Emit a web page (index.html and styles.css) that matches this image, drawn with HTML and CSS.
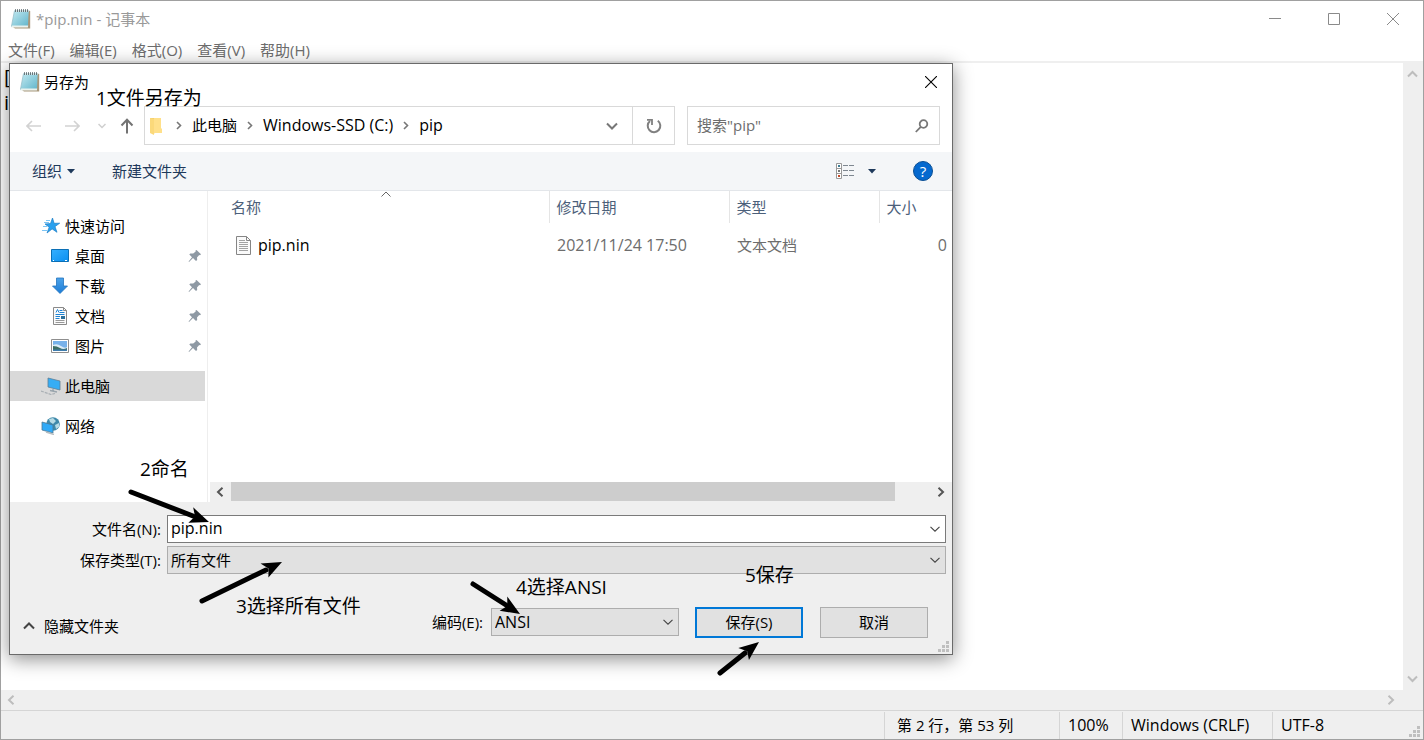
FILE: index.html
```html
<!DOCTYPE html>
<html lang="zh-CN">
<head>
<meta charset="utf-8">
<title>*pip.nin - 记事本</title>
<link rel="stylesheet" href="styles.css">
</head>
<body>
<svg class="defs" width="0" height="0" aria-hidden="true">
  <defs>
    <linearGradient id="pad" x1="0" y1="0" x2="1" y2="1"><stop offset="0" stop-color="#c4eaf1"/><stop offset="1" stop-color="#5fb4ca"/></linearGradient>
    <linearGradient id="blue" x1="0" y1="0" x2="1" y2="1"><stop offset="0" stop-color="#35b0ff"/><stop offset="1" stop-color="#0a8ff0"/></linearGradient>
    <linearGradient id="arrowdown" x1="0" y1="0" x2="0" y2="1"><stop offset="0" stop-color="#4ba3ea"/><stop offset="1" stop-color="#1c7cd6"/></linearGradient>
    <symbol id="notepad" viewBox="0 0 20 20">
      <path d="M17.500 1.500l1.700.5v17.500H4l-2-1.500z" fill="#a8977a"/>
      <path d="M3.500 1.500h14.300l-1 16.500H.4z" fill="url(#pad)"/>
      <path d="M.6 16.500h16.600l-.3 2H.2z" fill="#e9f2ee"/>
      <path d="M3.500 1.500L.4 17.500" stroke="#8fb9c4" stroke-width=".7"/>
      <path d="M4 2h13.500" stroke="#d9e6e8" stroke-width="1.600"/>
      <path d="M4.500.2v2.800M6.500.2v2.800M8.500.2v2.800M10.500.2v2.800M12.500.2v2.800M14.500.2v2.800M16.500.2v2.800" stroke="#68767a" stroke-width="1"/>
    </symbol>
    <symbol id="pin" viewBox="0 0 14 14">
      <path d="M8.500 1L13 5.300l-1 .9-.8-.3-2.200 2.500.2 2.500-1.200 1L5 9 1 13l-.4-.5L4 8.200 1.300 5.500l1-1 2.900.1 2.500-2.100L7.500 1.600z" fill="#8e99a4"/>
    </symbol>
    <symbol id="thin-down" viewBox="0 0 10 6"><path d="M.5.8L5 5.200 9.500.8" fill="none" stroke="#444" stroke-width="1.100"/></symbol>
    <symbol id="crumb" viewBox="0 0 6 9"><path d="M1 1l3.500 3.500L1 8" fill="none" stroke="#777" stroke-width="1.600"/></symbol>
    <symbol id="left" viewBox="0 0 8 10"><path d="M6.500.8L2 5l4.500 4.200" fill="none" stroke="currentColor" stroke-width="2"/></symbol>
    <symbol id="right" viewBox="0 0 8 10"><path d="M1.500.8L6 5 1.500 9.200" fill="none" stroke="currentColor" stroke-width="2"/></symbol>
    <symbol id="grip" viewBox="0 0 11 11"><path d="M8 0h3v3H8zM4 4h3v3H4zM8 4h3v3H8zM0 8h3v3H0zM4 8h3v3H4zM8 8h3v3H8z" fill="#bfbfbf"/></symbol>
  </defs>
</svg>

<div class="notepad">
  <header class="titlebar">
    <svg class="app-icon"><use href="#notepad"/></svg>
    <span class="title">*pip.nin - 记事本</span>
    <div class="window-buttons">
      <button aria-label="最小化"><svg width="12" height="12"><path d="M0 5.500h12" stroke="#8a8a8a"/></svg></button>
      <button aria-label="最大化"><svg width="12" height="12"><path d="M.5.5h11v11H.5z" fill="none" stroke="#8a8a8a"/></svg></button>
      <button aria-label="关闭"><svg width="12" height="12"><path d="M0 0l12 12M12 0L0 12" stroke="#8a8a8a"/></svg></button>
    </div>
  </header>
  <nav class="menubar">
    <button>文件(F)</button><button>编辑(E)</button><button>格式(O)</button><button>查看(V)</button><button>帮助(H)</button>
  </nav>
  <div class="editor">
    <textarea class="editor-text" aria-label="文本编辑器" spellcheck="false">[
i</textarea>
    <div class="vscroll">
      <svg width="11" height="8"><path d="M1 6.500L5.500 2 10 6.500" fill="none" stroke="#bdbdbd" stroke-width="2"/></svg>
      <svg width="11" height="8"><path d="M1 1.500L5.500 6 10 1.500" fill="none" stroke="#bdbdbd" stroke-width="2"/></svg>
    </div>
  </div>
  <div class="hscroll">
    <svg width="8" height="10"><use href="#left"/></svg>
    <svg width="8" height="10"><use href="#right"/></svg>
  </div>
  <footer class="statusbar">
    <span class="status-position">第 2 行，第 53 列</span>
    <span class="status-zoom latin">100%</span>
    <span class="status-eol latin">Windows (CRLF)</span>
    <span class="status-encoding latin">UTF-8</span>
    <svg class="grip"><use href="#grip"/></svg>
  </footer>
</div>

<section class="dialog" role="dialog" aria-label="另存为">
  <header class="dialog-title">
    <svg class="app-icon"><use href="#notepad"/></svg>
    <span>另存为</span>
    <button class="dialog-close" aria-label="关闭"><svg width="12" height="12"><path d="M0 0l12 12M12 0L0 12" stroke="#000" stroke-width="1.100"/></svg></button>
  </header>

  <div class="navrow">
    <div class="nav-buttons">
      <button aria-label="后退"><svg width="16" height="12"><path d="M1 6h14M6 1L1 6l5 5" fill="none" stroke="#d2d2d2" stroke-width="1.600"/></svg></button>
      <button aria-label="前进"><svg width="16" height="12"><path d="M1 6h14M10 1l5 5-5 5" fill="none" stroke="#d2d2d2" stroke-width="1.600"/></svg></button>
      <button aria-label="最近位置"><svg width="8" height="6"><path d="M.5 1L4 4.500 7.500 1" fill="none" stroke="#cfcfcf" stroke-width="1.500"/></svg></button>
      <button aria-label="上移"><svg width="14" height="16"><path d="M7 15.500V1.500M1.500 7.500L7 1.800l5.500 5.700" fill="none" stroke="#737373" stroke-width="2"/></svg></button>
    </div>
    <div class="address">
      <svg class="folder" width="12" height="18"><path d="M0 1h5v14l-1 2-4-2z" fill="#f5ce68"/><path d="M4 1h7v10l1 1v4H4z" fill="#ffe08a"/><path d="M0 1l4 1v16l-4-2z" fill="#fbd97a"/></svg>
      <svg class="sep" width="6" height="9"><use href="#crumb"/></svg>
      <button>此电脑</button>
      <svg class="sep" width="6" height="9"><use href="#crumb"/></svg>
      <button class="latin">Windows-SSD (C:)</button>
      <svg class="sep" width="6" height="9"><use href="#crumb"/></svg>
      <button class="latin">pip</button>
      <button class="history" aria-label="以前的位置"><svg width="12" height="8"><path d="M1 1.500L6 6.500l5-5" fill="none" stroke="#777" stroke-width="2"/></svg></button>
      <button class="refresh" aria-label="刷新"><svg width="16" height="16"><path d="M11.800 2.800A6.300 6.300 0 1 1 4 3" fill="none" stroke="#808080" stroke-width="2"/><path d="M1 1.900h5v5" fill="none" stroke="#808080" stroke-width="1.800"/></svg></button>
    </div>
    <div class="search">
      <input type="text" aria-label="搜索" placeholder='搜索"pip"'>
      <svg width="14" height="14"><circle cx="8.500" cy="5" r="3.800" fill="none" stroke="#777" stroke-width="1.800"/><path d="M5.800 7.800L.8 13" stroke="#777" stroke-width="1.800"/></svg>
    </div>
  </div>

  <div class="toolbar">
    <button>组织<svg width="8" height="5"><path d="M0 0h8L4 4.500z" fill="#1e395b"/></svg></button>
    <button class="new-folder">新建文件夹</button>
    <button class="view" aria-label="更改视图">
      <svg width="19" height="16"><path d="M.5.5h5v15h-5zM.5 5.500h5M.5 10.500h5" fill="#fff" stroke="#999"/><path d="M2 2h2v2H2z" fill="#3c7c94"/><path d="M2 7h2v2H2z" fill="#777"/><path d="M2 12h2v2H2z" fill="#c14a28"/><path d="M7 2.500h5M13 2.500h5M7 7.500h5M13 7.500h5M7 12.500h5M13 12.500h5" stroke="#7e8790"/></svg>
      <svg width="8" height="5"><path d="M0 0h8L4 4.500z" fill="#1e395b"/></svg>
    </button>
    <button class="help" aria-label="帮助">?</button>
  </div>

  <div class="browser">
    <nav class="tree">
      <button class="root">
        <svg width="18" height="16"><path d="M10.500 0l1.600 5.300 5.600-.1-4.700 3.400 2 5.700-4.900-3.400L5 15l2.200-5.800L3 6l5.500-.5z" fill="#29a0ee" stroke="#1c7ec6" stroke-width=".7"/><path d="M4 2.500h4M2 4.500h5M1 8.500h4M0 12.500h5" stroke="#7cc5f5" stroke-width="1"/></svg>快速访问</button>
      <button class="child"><svg width="18" height="14"><path d="M.5.5h17v12H.5z" fill="url(#blue)" stroke="#0b6fb5"/><path d="M2 11.500h1M14 11.500h2" stroke="#fff"/></svg>桌面<svg class="pin"><use href="#pin"/></svg></button>
      <button class="child"><svg width="18" height="18"><path d="M5.500 1h7v8h4L9 16.500 1.500 9h4z" fill="url(#arrowdown)" stroke="#2373bd" stroke-width=".8"/></svg>下载<svg class="pin"><use href="#pin"/></svg></button>
      <button class="child"><svg width="18" height="18"><path d="M2.500.5h10l3 3v14h-13z" fill="#fbfbfb" stroke="#8a8a8a"/><path d="M12.500.5v3h3" fill="none" stroke="#8a8a8a"/><path d="M5 5.500l1.500-3L8 5.500M8.500 3.500h3M8.500 5.500h5M4.500 7.500h9M4.500 9.500h4.500M4.500 11.500h4" fill="none" stroke="#1e83d3"/><path d="M10 9h4v3h-4z" fill="#2b6f9b"/><path d="M4.500 13.500h9M4.500 15.500h9" stroke="#999"/></svg>文档<svg class="pin"><use href="#pin"/></svg></button>
      <button class="child"><svg width="18" height="14"><path d="M.5.5h17v13H.5z" fill="#fff" stroke="#8e8e8e"/><path d="M2 2h14v10H2z" fill="#78b2ea"/><path d="M2 6q4-2 8 1t6 1v2H2z" fill="#dcecf7"/><path d="M2 7q4 0 7 2t7 0v3H2z" fill="#3d6f66"/><path d="M2 10.500h14V12H2z" fill="#3f7daf"/></svg>图片<svg class="pin"><use href="#pin"/></svg></button>
      <button class="root selected"><svg width="20" height="18"><path d="M7 1l12 3v9L7 10z" fill="#36adf5" stroke="#5e7f96" stroke-width=".8"/><path d="M12 12v2M9 13.500l7 1.500" stroke="#9aa5ad" stroke-width="1.300"/><path d="M0 14l10 3.500 4-1" fill="none" stroke="#aab0b5" stroke-width="1.200" stroke-dasharray="3 1"/></svg>此电脑</button>
      <button class="root"><svg width="20" height="18"><circle cx="12" cy="7" r="6.800" fill="#3f89aa"/><path d="M8 2l4-1 3 3-3 3-3-2zM14 8l4-2v4l-3 2z" fill="#b7dbe5"/><path d="M1 5l11 3v8L1 13z" fill="#31aaf7" stroke="#4c7894" stroke-width=".8"/><path d="M5 15l8 2.500" stroke="#b4bcc0" stroke-width="1.500"/></svg>网络</button>
    </nav>
    <div class="files">
      <table>
        <colgroup><col class="col-name"><col class="col-date"><col class="col-type"><col></colgroup>
        <thead><tr>
          <th>名称<svg class="sort" width="10" height="6"><path d="M.5 5.500L5 1l4.500 4.500" fill="none" stroke="#666"/></svg></th>
          <th>修改日期</th><th>类型</th><th>大小</th>
        </tr></thead>
        <tbody><tr>
          <td class="name latin"><div><svg width="15" height="19"><path d="M.5.500h10l4 4v14H.5z" fill="#fafafa" stroke="#858585"/><path d="M10.500.5v4h4" fill="none" stroke="#858585"/><path d="M3 4.500h6M3 6.500h9M3 8.500h9M3 10.500h9M3 12.500h9M3 14.500h9" stroke="#a2a2a2"/></svg>pip.nin</div></td>
          <td class="latin">2021/11/24 17:50</td><td>文本文档</td><td class="size latin">0</td>
        </tr></tbody>
      </table>
      <div class="file-scroll">
        <svg width="8" height="10"><use href="#left"/></svg>
        <div class="track"><div class="thumb"></div></div>
        <svg width="8" height="10"><use href="#right"/></svg>
      </div>
    </div>
  </div>

  <form class="fields">
    <label for="filename">文件名(N):</label>
    <div class="combo"><input class="latin" id="filename" type="text" value="pip.nin"><svg class="chevron"><use href="#thin-down"/></svg></div>
    <label for="filetype">保存类型(T):</label>
    <div class="combo"><select id="filetype"><option>所有文件</option></select><svg class="chevron"><use href="#thin-down"/></svg></div>
  </form>

  <footer class="actions">
    <button class="hide-folders"><svg width="12" height="8"><path d="M1 6.500l5-5 5 5" fill="none" stroke="#444" stroke-width="2"/></svg>隐藏文件夹</button>
    <label for="encoding">编码(E):</label>
    <div class="combo encoding"><select class="latin" id="encoding"><option>ANSI</option></select><svg class="chevron"><use href="#thin-down"/></svg></div>
    <button class="push default">保存(S)</button>
    <button class="push">取消</button>
    <svg class="grip"><use href="#grip"/></svg>
  </footer>
</section>

<div class="notes">
  <svg class="arrows" width="800" height="700">
    <g stroke="#000" stroke-width="5" stroke-linecap="round"><path d="M131 492l62 24M202 601l64-31M473 584l33 21M720 673l25-20"/></g>
    <path d="M0 0L-20-8-15 0l-4 8z" transform="translate(209 522) rotate(21)"/>
    <path d="M0 0L-20-8-15 0l-4 8z" transform="translate(282 562) rotate(-26)"/>
    <path d="M0 0L-20-8-15 0l-4 8z" transform="translate(520 614) rotate(32)"/>
    <path d="M0 0L-20-8-15 0l-4 8z" transform="translate(759 642) rotate(-38)"/>
  </svg>
  <span class="note note-1">1文件另存为</span>
  <span class="note note-2">2命名</span>
  <span class="note note-3">3选择所有文件</span>
  <span class="note note-4">4选择ANSI</span>
  <span class="note note-5">5保存</span>
</div>
</body>
</html>
```
FILE: styles.css
```css
* { box-sizing: border-box; }

body {
  margin: 0;
  font: 15px/20px "Open Sans", "Noto Sans CJK SC", sans-serif;
  color: #000;
  position: relative;
}

svg { display: block; flex: none; }
.defs { position: absolute; }

button, input, select, textarea {
  font: inherit;
  color: inherit;
  margin: 0;
  padding: 0;
  border: 0;
  border-radius: 0;
  background: none;
  outline: 0;
}
button { white-space: nowrap; }
.latin { font-size: 16px; }

/* Notepad window */
.notepad {
  display: flex;
  flex-direction: column;
  min-height: 100vh;
  border: 1px solid #a0a0a0;
  background: #fff;
}
.titlebar {
  display: flex;
  align-items: center;
  height: 36px;
  padding-left: 10px;
  gap: 5px;
  color: #999;
}
.app-icon { width: 20px; height: 20px; }
.window-buttons { display: flex; margin-left: auto; padding-right: 1px; }
.window-buttons button { width: 59px; height: 36px; display: grid; place-items: center; }
.menubar {
  display: flex;
  gap: 15px;
  padding: 3px 7px 1px;
  color: #6d6d6d;
}
.editor {
  flex: 1;
  display: flex;
  border-top: 2px solid #efefef;
}
.editor-text {
  flex: 1;
  resize: none;
  overflow: hidden;
  padding: 1px 3px;
  font-size: 20px;
  line-height: 26px;
}
.vscroll {
  width: 20px;
  padding: 7px 2px 7px 0;
  background: #efefef;
  display: flex;
  flex-direction: column;
  justify-content: space-between;
  align-items: center;
}
.hscroll {
  display: flex;
  justify-content: space-between;
  align-items: center;
  height: 20px;
  padding: 0 28px 0 6px;
  background: #efefef;
  color: #bdbdbd;
}
.statusbar {
  display: flex;
  justify-content: flex-end;
  align-items: stretch;
  height: 29px;
  padding-top: 1px;
  border-top: 1px solid #d5d5d5;
  background: #efefef;
  position: relative;
}
.statusbar span { border-left: 1px solid #d5d5d5; padding: 3px 8px; white-space: nowrap; }
.statusbar .status-position { width: 175px; padding-left: 12px; }
.status-zoom { width: 63px; }
.status-eol { width: 150px; }
.status-encoding { width: 151px; }
.grip { position: absolute; right: 3px; bottom: 2px; width: 11px; height: 11px; }

/* Save-as dialog */
.dialog {
  position: absolute;
  left: 9px;
  top: 63px;
  right: 471px;
  border: 1px solid #6a6a6a;
  background: #fff;
  box-shadow: 0 4px 18px rgba(0, 0, 0, .45);
}
.dialog-title {
  display: flex;
  align-items: center;
  gap: 4px;
  height: 36px;
  padding: 0 15px 0 10px;
}
.dialog-close { margin-left: auto; }
.navrow {
  display: flex;
  padding: 6px 12px 7px 16px;
}
.nav-buttons {
  display: flex;
  align-items: center;
  gap: 18px;
  width: 118px;
}
.nav-buttons button { display: block; }
.nav-buttons button:nth-child(2) { margin-left: 4px; }
.nav-buttons button:nth-child(4) { margin-left: -4px; }
.address {
  flex: 1;
  display: flex;
  align-items: center;
  height: 39px;
  padding-left: 5px;
  border: 1px solid #d9d9d9;
}
.address > button { padding-bottom: 1px; }
.sep { margin: 0 10px; }
.folder + .sep { margin-left: 14px; }
.address > .history { margin-left: auto; padding: 0 14px; }
.address > .refresh { height: 37px; padding: 0 13px; width: 42px; border-left: 1px solid #d9d9d9; }
.search {
  display: flex;
  align-items: center;
  width: 253px;
  margin-left: 12px;
  padding: 0 10px 0 9px;
  border: 1px solid #d9d9d9;
}
.search input { flex: 1; min-width: 0; padding-bottom: 2px; }
.search input::placeholder { color: #6d6d6d; opacity: 1; }

.toolbar {
  display: flex;
  align-items: center;
  height: 39px;
  padding: 0 19px 0 22px;
  background: #f4f6f8;
  border-bottom: 1px solid #e3e6ea;
  color: #1e395b;
}
.toolbar button { display: flex; align-items: center; gap: 5px; }
.toolbar .new-folder { margin-left: 37px; }
.toolbar .view { margin-left: auto; gap: 13px; }
.toolbar .help {
  width: 20px;
  height: 20px;
  margin-left: 37px;
  justify-content: center;
  border: 1px solid #0b4f94;
  border-radius: 50%;
  background: #0569cf;
  color: #fff;
}

.browser { display: flex; min-height: 311px; }
.tree {
  display: flex;
  flex-direction: column;
  width: 198px;
  padding: 20px 2px 0 0;
  border-right: 1px solid #eee;
}
.tree button {
  display: flex;
  align-items: center;
  gap: 6px;
  height: 30px;
  text-align: left;
}
.tree .root { padding-left: 31px; gap: 4px; }
.tree .root:first-child { padding-left: 32px; gap: 5px; }
.tree .child { padding-left: 41px; }
.tree .child + .root, .tree .root + .root { margin-top: 10px; }
.tree .selected { background: #d9d9d9; }
.pin { width: 14px; height: 14px; margin-left: auto; margin-right: 3px; }

.files { flex: 1; min-width: 0; display: flex; flex-direction: column; }
.files table {
  width: calc(100% - 15px);
  margin-left: 15px;
  table-layout: fixed;
  border-collapse: collapse;
}
.col-name { width: 326px; }
.col-date { width: 180px; }
.col-type { width: 150px; }
.files th {
  position: relative;
  height: 32px;
  padding: 0 7px;
  border-right: 1px solid #e5e5e5;
  font-weight: 400;
  text-align: left;
  color: #4c607a;
}
.files th:first-child { padding-left: 8px; }
.files th:last-child { border-right: 0; }
.sort { position: absolute; left: calc(50% - 5px); top: 0; }
.files td { height: 44px; padding: 0 8px; color: #6d6d6d; }
.files td.name { padding-left: 13px; color: #000; }
.name div { display: flex; align-items: center; gap: 7px; }
.files td.size { padding-right: 5px; text-align: right; }
.file-scroll {
  display: flex;
  align-items: center;
  gap: 7px;
  height: 20px;
  margin: auto 0 0 2px;
  padding: 0 7px 0 6px;
  background: #efefef;
  color: #555;
}
.track { flex: 1; height: 19px; align-self: flex-start; }
.thumb { width: 95%; height: 100%; background: #cdcdcd; }

.fields {
  display: grid;
  grid-template-columns: 151px 1fr;
  column-gap: 6px;
  row-gap: 3px;
  align-items: center;
  padding: 13px 6px 0 0;
  background: #efefef;
}
.fields label { text-align: right; }
.combo { position: relative; }
.combo input, .combo select {
  display: block;
  width: 100%;
  height: 28px;
  padding: 0 24px 1px 3px;
  border: 1px solid #adadad;
  background: #e1e1e1;
  appearance: none;
}
.combo input { padding-bottom: 2px; border-color: #7a7a7a; background: #fff; }
.chevron {
  position: absolute;
  right: 6px;
  top: 11px;
  width: 10px;
  height: 6px;
  pointer-events: none;
}
.actions {
  position: relative;
  display: flex;
  align-items: center;
  height: 80px;
  padding: 17px 24px 0 13px;
  background: #efefef;
}
.actions label { padding-bottom: 2px; }
.hide-folders { display: flex; align-items: center; gap: 9px; margin-right: auto; padding-top: 6px; }
.encoding { width: 188px; margin: 0 16px 1px 8px; }
.push {
  width: 108px;
  height: 31px;
  padding-bottom: 2px;
  border: 1px solid #adadad;
  background: #e1e1e1;
}
.push.default { border: 2px solid #0078d7; margin-right: 17px; }

/* Hand-placed notes drawn over the windows */
.notes { position: absolute; left: 0; top: 0; pointer-events: none; }
.arrows { position: absolute; left: 0; top: 0; }
.note { position: absolute; font-size: 19px; line-height: 24px; white-space: nowrap; }
.note-1 { left: 96px; top: 86px; }
.note-2 { left: 140px; top: 457px; }
.note-3 { left: 236px; top: 594px; }
.note-4 { left: 516px; top: 575px; }
.note-5 { left: 745px; top: 563px; }
```
